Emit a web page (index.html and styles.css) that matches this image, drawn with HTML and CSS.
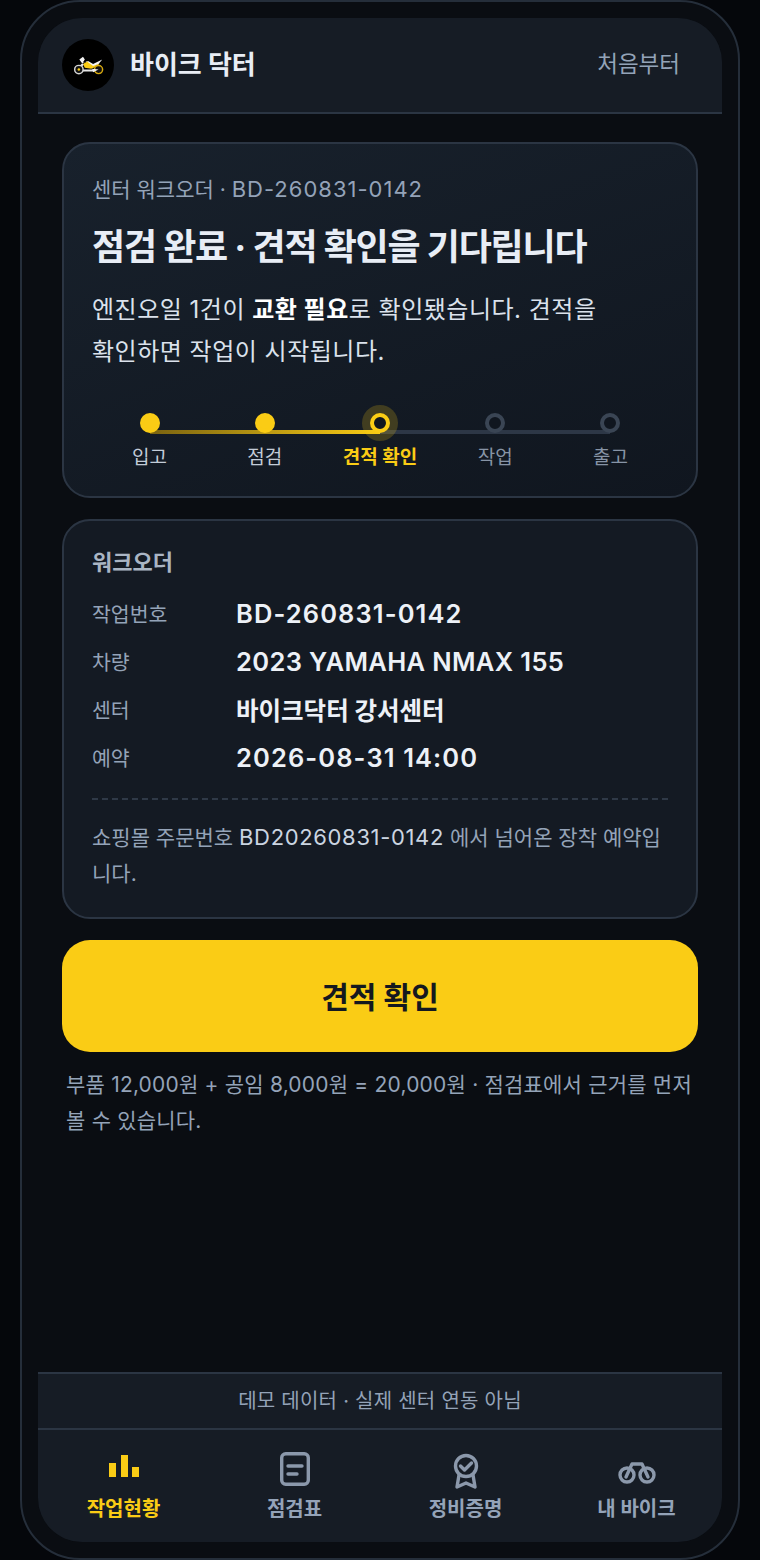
FILE: index.html
```html
<!DOCTYPE html>
<html lang="ko">
<head>
    <meta charset="UTF-8">
    <meta name="viewport" content="width=device-width, initial-scale=1.0">
    <title>바이크 닥터</title>
    <link rel="stylesheet" href="styles.css">
</head>
<body>
    <div class="phone">
        <div class="screen">
            <header class="topbar">
                <div class="brand">
                    <span class="logo">
                        <svg width="33" height="22" viewBox="0 0 36 24">
                            <path d="M12 11 L17 8 L24 12 L30 10 L28 13 L21 16 L14 15 Z" fill="#facc15"/>
                            <path d="M8 6 L12 3 L14 6 L12 9 L18 8 L23 11 L33 6 L29 11 L23 13 L16 8 L11 10 Z" fill="#f4f4f4"/>
                            <path d="M7 16 L12 11 M11 18 L26 18" stroke="#e5e5e5" stroke-width="2.4" fill="none"/>
                            <circle cx="7.5" cy="17" r="4.6" fill="#111" stroke="#d4d4d4" stroke-width="1.6"/>
                            <circle cx="7.5" cy="17" r="1.4" fill="#facc15"/>
                            <circle cx="29" cy="17" r="4.4" fill="#111" stroke="#d6a80e" stroke-width="1.6"/>
                            <path d="M22 16 L29 17 L23 20 Z" fill="#f4f4f4"/>
                        </svg>
                    </span>
                    <strong class="brand-name">바이크 닥터</strong>
                </div>
                <span class="restart">처음부터</span>
            </header>

            <main class="content">
                <section class="card status">
                    <p class="eyebrow">센터 워크오더 · <span class="num">BD-260831-0142</span></p>
                    <h1>점검 완료 · 견적 확인을 기다립니다</h1>
                    <p class="desc">엔진오일 1건이 <b>교환 필요</b>로 확인됐습니다. 견적을<br>확인하면 작업이 시작됩니다.</p>
                    <ol class="steps">
                        <li class="step done"><i></i>입고</li>
                        <li class="step done"><i></i>점검</li>
                        <li class="step active"><i></i>견적 확인</li>
                        <li class="step"><i></i>작업</li>
                        <li class="step"><i></i>출고</li>
                    </ol>
                </section>

                <section class="card order">
                    <h2>워크오더</h2>
                    <dl class="rows">
                        <div class="row"><dt>작업번호</dt><dd class="id">BD-260831-0142</dd></div>
                        <div class="row"><dt>차량</dt><dd>2023 YAMAHA NMAX 155</dd></div>
                        <div class="row"><dt>센터</dt><dd class="kr">바이크닥터 강서센터</dd></div>
                        <div class="row"><dt>예약</dt><dd class="id">2026-08-31 14:00</dd></div>
                    </dl>
                    <p class="order-note">쇼핑몰 주문번호 <span class="num">BD20260831-0142</span> 에서 넘어온 장착 예약입니다.</p>
                </section>

                <button class="cta">견적 확인</button>
                <p class="price-note">부품 12,000원 + 공임 8,000원 = 20,000원 · 점검표에서 근거를 먼저 볼 수 있습니다.</p>
            </main>

            <div class="demo">데모 데이터 · 실제 센터 연동 아님</div>

            <nav class="tabs">
                <a class="tab on">
                    <svg width="40" height="40" viewBox="0 0 40 40" fill="#facc15">
                        <rect x="5" y="12" width="7" height="14"/>
                        <rect x="17" y="4" width="7" height="22"/>
                        <rect x="28" y="16" width="7" height="10"/>
                    </svg>
                    작업현황
                </a>
                <a class="tab">
                    <svg width="40" height="40" viewBox="0 0 40 40" fill="none" stroke="#8b98ab" stroke-width="3.400" stroke-linecap="round">
                        <rect x="6.700" y="2.700" width="26.600" height="30.600" rx="4"/>
                        <path d="M13 15 H27 M13 23 H22"/>
                    </svg>
                    점검표
                </a>
                <a class="tab">
                    <svg width="40" height="40" viewBox="0 0 40 40" fill="none" stroke="#8b98ab" stroke-width="3.400" stroke-linejoin="round" stroke-linecap="round">
                        <circle cx="20" cy="15" r="10.500"/>
                        <path d="M14.500 15 L18.500 19 L25.500 12"/>
                        <path d="M13 24 L11 36 L20 32 L29 36 L27 24"/>
                    </svg>
                    정비증명
                </a>
                <a class="tab">
                    <svg width="40" height="40" viewBox="0 0 40 40" fill="none" stroke="#8b98ab" stroke-width="3.400" stroke-linecap="round" stroke-linejoin="round">
                        <circle cx="10" cy="24" r="7"/>
                        <circle cx="30" cy="24" r="7"/>
                        <path d="M9 26 L15 13 H25 L31 26"/>
                    </svg>
                    내 바이크
                </a>
            </nav>
        </div>
    </div>
</body>
</html>
```

FILE: styles.css
```css
* {
    box-sizing: border-box;
}
html, body {
    height: 100%;
}
body {
    margin: 0;
    background: #05070b;
    color: #e8edf5;
    font-family: Inter, "Noto Sans CJK KR", sans-serif;
}
h1, h2, p, ol, dl, dd {
    margin: 0;
    padding: 0;
}
.phone {
    width: 720px;
    height: 1560px;
    margin: 0 auto;
    padding: 16px;
    background: #0a0d12;
    border: 2px solid #252e3a;
    border-radius: 60px;
}
.screen {
    height: 100%;
    display: flex;
    flex-direction: column;
    border-radius: 44px;
    overflow: hidden;
    background: #0a0d12;
}

/* top bar */
.topbar {
    height: 96px;
    flex: none;
    display: flex;
    align-items: center;
    justify-content: space-between;
    padding: 0 42px 0 24px;
    background: #161c25;
    border-bottom: 2px solid #2b3543;
}
.brand {
    display: flex;
    align-items: center;
    gap: 16px;
}
.logo {
    width: 52px;
    height: 52px;
    display: flex;
    align-items: center;
    justify-content: center;
    border-radius: 50%;
    background: #000;
}
.brand-name {
    font-size: 26px;
    font-weight: 700;
    padding-bottom: 6px;
}
.restart {
    font-size: 22.5px;
    color: #94a3b8;
    padding-bottom: 6px;
}

/* main */
.content {
    flex: 1;
    padding: 28px 24px 0;
}
.card {
    border: 2px solid #2b3543;
    border-radius: 28px;
    padding: 28px;
}
.status {
    height: 356px;
    background: linear-gradient(160deg, #18212c, #10161f);
}
.eyebrow {
    font-size: 21px;
    line-height: 36px;
    color: #94a3b8;
    margin-top: -1px;
}
.eyebrow .num {
    font-size: 22px;
    letter-spacing: 1px;
}
h1 {
    margin-top: 15px;
    font-size: 36px;
    line-height: 48px;
    font-weight: 700;
    letter-spacing: -1.2px;
}
.desc {
    margin-top: 18px;
    font-size: 24px;
    line-height: 42px;
    letter-spacing: 0.5px;
    color: #dbe2ec;
}
.desc b {
    color: #fff;
    font-weight: 700;
}
.steps {
    position: relative;
    display: grid;
    grid-template-columns: repeat(5, 1fr);
    margin-top: 40px;
    list-style: none;
}
.steps::before,
.steps::after {
    content: "";
    position: absolute;
    top: 17px;
    height: 4px;
}
.steps::before {
    left: 58px;
    right: 58px;
    background: #2d3746;
}
.steps::after {
    left: 58px;
    width: 230px;
    background: linear-gradient(90deg, #7a6310, #facc15);
}
.step {
    display: flex;
    flex-direction: column;
    align-items: center;
    gap: 10px;
    font-size: 19px;
    line-height: 30px;
    color: #8794a6;
}
.step i {
    position: relative;
    z-index: 1;
    width: 20px;
    height: 20px;
    border-radius: 50%;
    background: #10161f;
    border: 4px solid #3a4554;
}
.step.done {
    color: #c3ccd8;
}
.step.done i {
    background: #facc15;
    border-color: #facc15;
}
.step.active {
    color: #facc15;
    font-weight: 700;
}
.step.active i {
    border-color: #facc15;
    box-shadow: 0 0 0 8px rgba(250, 204, 21, 0.2);
}

.order {
    height: 400px;
    margin-top: 21px;
    background: #141a23;
}
h2 {
    font-size: 22px;
    line-height: 24px;
    font-weight: 700;
    color: #aab5c4;
    margin-top: 1px;
}
.rows {
    margin-top: 15px;
}
.row {
    display: flex;
    align-items: center;
    height: 48px;
}
.row dt {
    width: 144px;
    font-size: 20.5px;
    color: #94a3b8;
}
.row dd {
    font-size: 25.5px;
    font-weight: 600;
    letter-spacing: 0.35px;
    color: #edf1f7;
}
.row dd.id {
    letter-spacing: 1.1px;
}
.row dd.kr {
    font-size: 24.5px;
    letter-spacing: 0;
    font-weight: 700;
}
.order-note {
    margin-top: 17px;
    padding-top: 19px;
    border-top: 2px dashed #2f3947;
    font-size: 21px;
    line-height: 36px;
    color: #94a3b8;
}
.order-note .num {
    font-size: 22px;
    letter-spacing: 0.65px;
    color: #cbd5e1;
}

.cta {
    display: block;
    width: 100%;
    height: 112px;
    margin-top: 21px;
    padding-bottom: 4px;
    border: 0;
    border-radius: 28px;
    background: #facc15;
    color: #14181f;
    font-family: inherit;
    font-size: 30px;
    font-weight: 700;
}
.price-note {
    margin-top: 15px;
    padding: 0 4px;
    font-size: 21px;
    line-height: 36px;
    letter-spacing: 0.2px;
    color: #94a3b8;
}

/* footer */
.demo {
    height: 58px;
    flex: none;
    display: flex;
    align-items: center;
    justify-content: center;
    padding-bottom: 4px;
    background: #161c25;
    border-top: 2px solid #2b3543;
    border-bottom: 2px solid #2b3543;
    font-size: 20px;
    letter-spacing: 0.25px;
    color: #94a3b8;
}
.tabs {
    height: 112px;
    flex: none;
    display: grid;
    grid-template-columns: repeat(4, 1fr);
    background: #161c25;
}
.tab {
    display: flex;
    flex-direction: column;
    align-items: center;
    padding-top: 21px;
    gap: 4px;
    font-size: 20px;
    line-height: 28px;
    font-weight: 700;
    color: #94a3b8;
}
.tab.on {
    color: #facc15;
}
```
